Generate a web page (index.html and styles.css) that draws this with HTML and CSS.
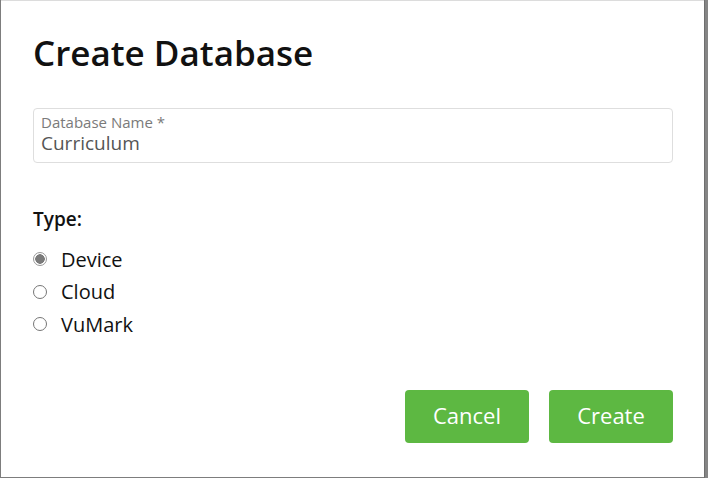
FILE: index.html
```html
<!DOCTYPE html>
<html>
<head>
<meta charset="utf-8">
<link rel="stylesheet" href="styles.css">
</head>
<body>
<div class="screen">
  <div class="modal">
    <h1 class="title">Create Database</h1>
    <div class="field">
      <div class="field-label">Database Name *</div>
      <div class="field-value">Curriculum</div>
    </div>
    <div class="type-label">Type:</div>
    <div class="options">
      <label class="option"><input type="radio" name="t" class="radio" checked><span>Device</span></label>
      <label class="option"><input type="radio" name="t" class="radio"><span>Cloud</span></label>
      <label class="option"><input type="radio" name="t" class="radio"><span>VuMark</span></label>
    </div>
    <div class="actions">
      <button class="btn">Cancel</button>
      <button class="btn">Create</button>
    </div>
  </div>
  <div class="edge"></div>
</div>
</body>
</html>
```
FILE: styles.css
```css
html, body {
  margin: 0;
  padding: 0;
  width: 708px;
  height: 478px;
  overflow: hidden;
  background: #7d7d7d;
  font-family: "Open Sans", sans-serif;
}
.screen {
  display: flex;
  height: 478px;
  padding-left: 1px;
}
.modal {
  width: 703px;
  height: 477px;
  background: #fff;
  border-top: 1px solid #dcdcdc;
  box-sizing: border-box;
  padding: 32px 31px 0 32px;
  display: flex;
  flex-direction: column;
}
.edge {
  flex: 1;
  background: #858585;
  border-left: 1px solid #6f6f6f;
}
.title {
  margin: 0;
  font-size: 35px;
  font-weight: 600;
  line-height: 40px;
  color: #111;
}
.field {
  margin-top: 35px;
  height: 55px;
  box-sizing: border-box;
  border: 1px solid #dedede;
  border-radius: 4px;
  padding: 4px 8px 0 7px;
}
.field-label {
  font-size: 15px;
  line-height: 18px;
  color: #7a7a7a;
}
.field-value {
  font-size: 19px;
  line-height: 24px;
  color: #555;
}
.type-label {
  margin-top: 44px;
  font-size: 19px;
  font-weight: 600;
  line-height: 24px;
  color: #111;
}
.options {
  margin-top: 12px;
  display: flex;
  flex-direction: column;
}
.option {
  display: flex;
  align-items: center;
  height: 32.5px;
  font-size: 20px;
  color: #111;
}
.radio {
  appearance: none;
  -webkit-appearance: none;
  margin: 0 14px 0 0;
  width: 14px;
  height: 14px;
  border: 1px solid #767676;
  border-radius: 50%;
  box-sizing: border-box;
  background: #fff;
}
.radio:checked {
  border-color: #999;
  background: radial-gradient(circle, #7a7a7a 0, #7a7a7a 4.5px, #fff 5px);
}
.actions {
  margin-top: 49.5px;
  display: flex;
  justify-content: flex-end;
  gap: 20px;
}
.btn {
  width: 124px;
  height: 53px;
  border: none;
  border-radius: 4px;
  background: #5db842;
  color: #fff;
  font-family: "Open Sans", sans-serif;
  font-size: 22px;
  padding: 0 0 3px 0;
}
```
